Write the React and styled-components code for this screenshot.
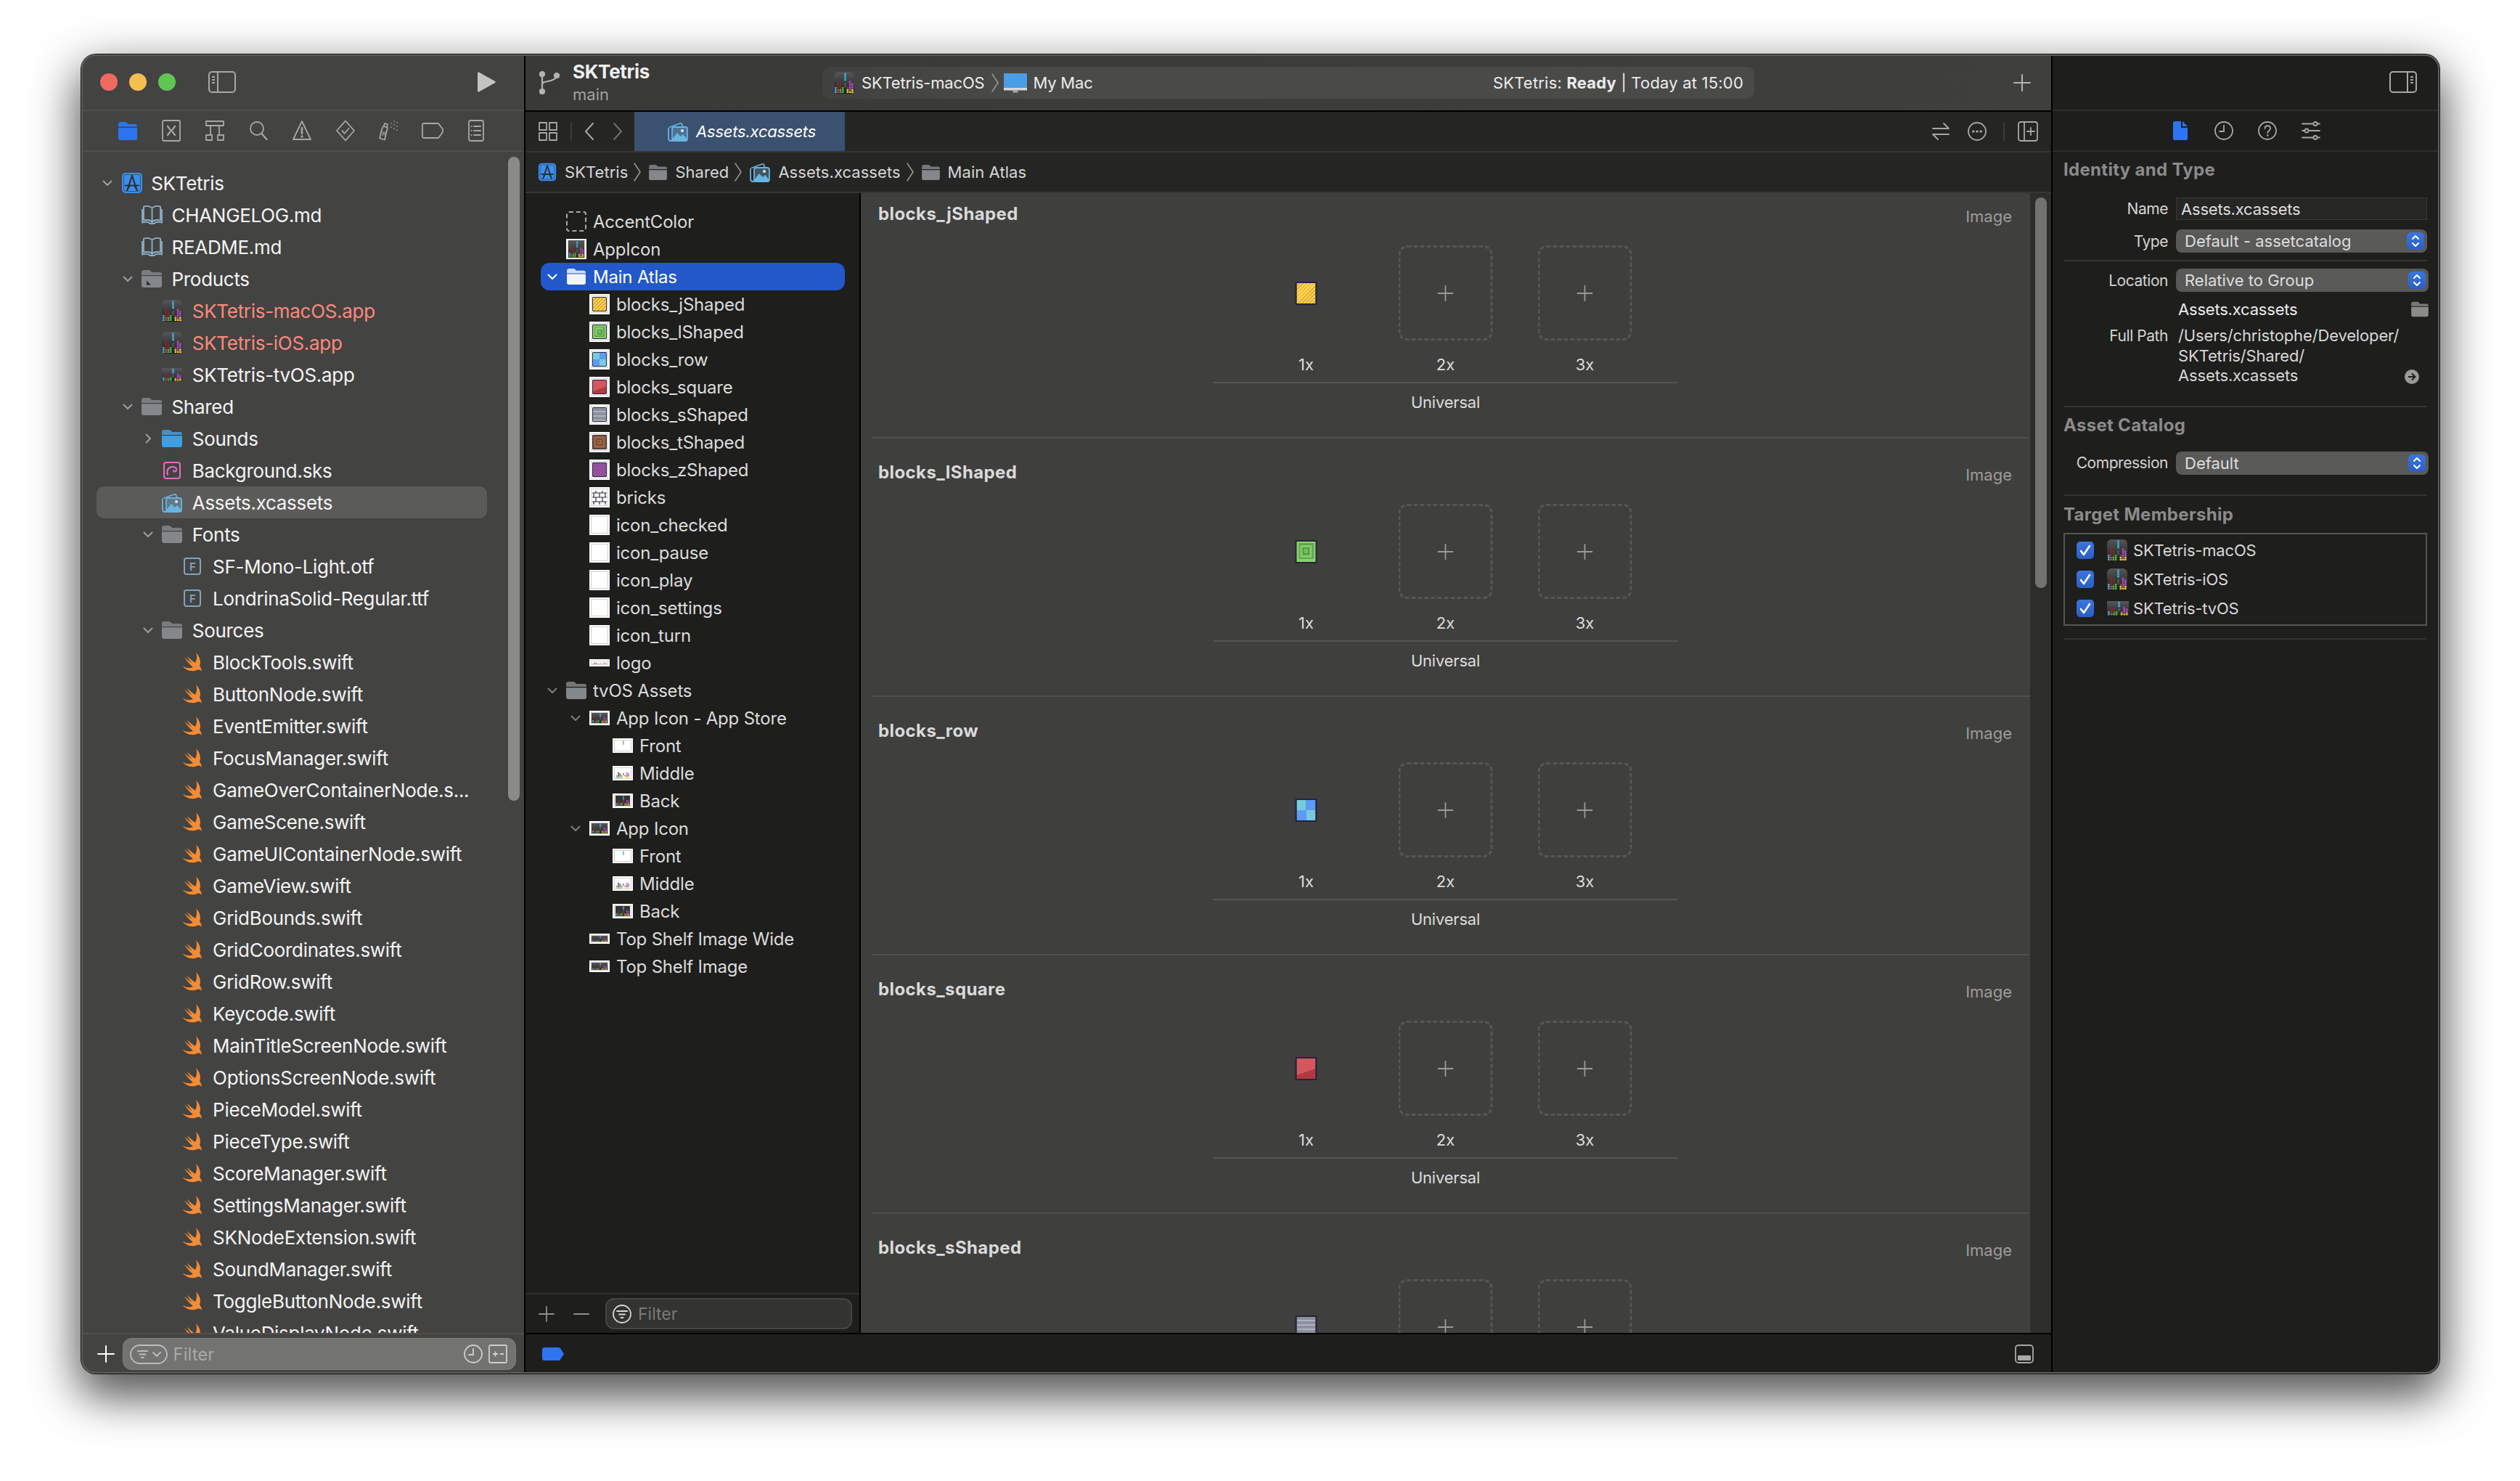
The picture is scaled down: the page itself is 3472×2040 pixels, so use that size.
import React from 'react'
import styled, { createGlobalStyle } from 'styled-components'

const GlobalStyle = createGlobalStyle`
  html, body { margin: 0; padding: 0; background: #fff; }
  body { font-family: Inter, "Noto Sans", sans-serif; width: 3472px; height: 2040px; overflow: hidden; }
  * { box-sizing: border-box; }
`

const Page = styled.div`
  width: 3472px;
  height: 2040px;
  padding: 75px 0 0 112px;
`
const Window = styled.div`
  width: 3249px;
  height: 1817px;
  display: flex;
  border-radius: 20px;
  overflow: hidden;
  position: relative;
  box-shadow: 0 0 0 1px #111, 0 30px 60px 0 rgba(0, 0, 0, 0.5), 0 20px 70px 4px rgba(0, 0, 0, 0.35);
  &::after {
    content: '';
    position: absolute;
    inset: 0;
    border-radius: 20px;
    box-shadow: inset 0 0 0 2px #5c5c5b;
    pointer-events: none;
  }
`

/* left column */
const Navigator = styled.aside`
  width: 610px;
  flex: none;
  display: flex;
  flex-direction: column;
  background: #434342;
  position: relative;
`
const NavTitle = styled.div`
  height: 78px;
  flex: none;
  display: flex;
  align-items: center;
  padding: 0 39px 0 26px;
  border-bottom: 2px solid #4f4f4e;
`
const Lights = styled.div`
  display: flex;
  gap: 16px;
  margin-right: 45px;
`
const Light = styled.span`
  width: 24px;
  height: 24px;
  border-radius: 50%;
  background: ${p => p.$color};
`
const NavTabs = styled.div`
  height: 56px;
  flex: none;
  display: flex;
  align-items: center;
  padding-left: 34px;
  border-bottom: 2px solid #4f4f4e;
`
const NavTab = styled.span`
  width: 60px;
  height: 30px;
  flex: none;
  display: flex;
  align-items: center;
  justify-content: center;
`
const Tree = styled.div`
  flex: 1;
  min-height: 0;
  overflow: hidden;
  padding: 21px 0 0 21px;
`
const TreeRow = styled.div`
  height: 44px;
  width: 538px;
  display: flex;
  align-items: center;
  padding-left: ${p => 7.5 + p.$level * 28.3}px;
  border-radius: 10px;
  background: ${p => (p.$selected ? '#5b5b5a' : 'transparent')};
`
const ChevronSlot = styled.span`
  width: 26px;
  flex: none;
  display: flex;
  align-items: center;
`
const TreeIcon = styled.span`
  width: 41.7px;
  flex: none;
  display: flex;
  align-items: center;
`
const TreeLabel = styled.span`
  font-size: 26px;
  letter-spacing: -0.3px;
  white-space: nowrap;
  color: ${p => (p.$missing ? '#fb8a7d' : '#f4f4f4')};
`
const FontBadge = styled.span`
  width: 24px;
  height: 24px;
  margin-left: 2px;
  border: 2px solid #83a4bd;
  border-radius: 4px;
  color: #83a4bd;
  font-size: 15px;
  font-weight: 600;
  display: flex;
  align-items: center;
  justify-content: center;
`
const NavScroll = styled.div`
  position: absolute;
  left: 588px;
  top: 141px;
  width: 16px;
  height: 887px;
  border-radius: 8px;
  background: #8a8a89;
`
const NavFooter = styled.div`
  height: 56px;
  flex: none;
  display: flex;
  align-items: center;
  padding: 0 11px 0 22px;
  gap: 10.6px;
  border-top: 2px solid #505050;
  background: #434342;
`
const NavFilter = styled.div`
  flex: 1;
  height: 44px;
  display: flex;
  align-items: center;
  padding: 0 11px 0 9px;
  border-radius: 12px;
  background: #737372;
  border: 1px solid #7d7d7c;
`
const NavFilterText = styled.span`
  flex: 1;
  margin-left: 8px;
  font-size: 24px;
  color: #a9a9a8;
`

/* middle column */
const Center = styled.main`
  flex: 1;
  min-width: 0;
  display: flex;
  flex-direction: column;
  border-left: 2px solid #000;
`
const Toolbar = styled.div`
  height: 79px;
  flex: none;
  display: flex;
  align-items: center;
  padding: 0 28px 0 19px;
  background: linear-gradient(90deg, #393938, #3f3f3e);
  border-bottom: 2px solid #000;
`
const BranchInfo = styled.div`
  width: 344px;
  flex: none;
  margin-left: 18px;
  display: flex;
  flex-direction: column;
  gap: 2px;
`
const ProjectName = styled.div`
  font-size: 26px;
  line-height: 30px;
  font-weight: 700;
  letter-spacing: -0.3px;
  color: #efefef;
`
const BranchName = styled.div`
  font-size: 22px;
  line-height: 28px;
  color: #a2a2a1;
`
const Activity = styled.div`
  width: 1284px;
  height: 44px;
  flex: none;
  display: flex;
  align-items: center;
  justify-content: space-between;
  padding: 0 15px 0 16px;
  border-radius: 10px;
  background: linear-gradient(90deg, #41413f, #4a4a49 22%);
  font-size: 22px;
  color: #ececec;
`
const Scheme = styled.div`
  display: flex;
  align-items: center;
  gap: 10px;
  letter-spacing: -0.2px;
`
const SchemeDevice = styled.span`
  display: flex;
  align-items: center;
  gap: 8px;
  margin-left: -3px;
`
const StatusText = styled.div`
  letter-spacing: 0.2px;
  b { font-weight: 700; }
`
const Spacer = styled.span`
  flex: 1;
`
const TabBar = styled.div`
  height: 56px;
  flex: none;
  display: flex;
  align-items: flex-start;
  padding: 0 18px 0 18px;
  background: #252524;
  border-bottom: 2px solid #363635;
`
const TabTools = styled.div`
  height: 54px;
  width: 132px;
  flex: none;
  display: flex;
  align-items: center;
`
const TabDivider = styled.span`
  width: 2px;
  height: 26px;
  background: #3a3a39;
  margin: 0 ${p => p.$space}px;
`
const EditorTab = styled.div`
  width: 290px;
  height: 54px;
  flex: none;
  display: flex;
  align-items: center;
  padding-left: 46px;
  gap: 11px;
  background: #3a5170;
  font-size: 22px;
  font-style: italic;
  letter-spacing: -0.2px;
  color: #fff;
`
const TabActions = styled.div`
  height: 54px;
  display: flex;
  align-items: center;
  gap: 18px;
`
const TabAction = styled.span`
  display: flex;
  align-items: center;
  margin-left: ${p => p.$before || 0}px;
`
const PathBar = styled.div`
  height: 56px;
  flex: none;
  display: flex;
  align-items: center;
  padding: 0 0 0 17px;
  background: #252524;
  border-bottom: 2px solid #363635;
  font-size: 22px;
  letter-spacing: 0.05px;
  color: #d6d6d6;
`
const Crumb = styled.span`
  display: flex;
  align-items: center;
  gap: 11px;
`
const CrumbSep = styled.span`
  display: flex;
  margin: 0 11px 0 8px;
`
const Editor = styled.div`
  flex: 1;
  min-height: 0;
  display: flex;
`
const AssetList = styled.div`
  width: 462px;
  flex: none;
  display: flex;
  flex-direction: column;
  background: #1e1e1d;
  border-right: 2px solid #000;
`
const AssetRows = styled.div`
  flex: 1;
  min-height: 0;
  overflow: hidden;
  padding: 20px 0 0 20.5px;
`
const AssetRow = styled.div`
  width: 419.5px;
  height: 38px;
  display: flex;
  align-items: center;
  padding-left: ${p => 9.5 + p.$level * 32}px;
  border-radius: 12px;
  background: ${p => (p.$selected ? '#2258c9' : 'transparent')};
  font-size: 24px;
  letter-spacing: -0.2px;
  color: ${p => (p.$selected ? '#fff' : '#dcdcdc')};
`
const AssetIcon = styled.span`
  width: 37px;
  flex: none;
  display: flex;
  align-items: center;
`
const Frame = styled.span`
  width: 28px;
  height: ${p => p.$h || 28}px;
  flex: none;
  display: flex;
  align-items: center;
  justify-content: center;
  background: #fff;
  box-shadow: inset 0 0 0 2px #fff, inset 0 0 0 3px #cfcfcf;
  overflow: hidden;
`
const square = (color, size) => `linear-gradient(${color}, ${color}) center / ${size}% ${size}% no-repeat`
const BLOCKS = {
  j: 'repeating-linear-gradient(135deg, #f9d84a 0 2.4px, #e79a3c 2.4px 3.6px)',
  l: `${square('#78c060', 22)}, ${square('#4f9a46', 38)}, ${square('#86cb6a', 62)}, ${square('#5da64f', 80)}, #8dd070`,
  row: 'conic-gradient(#5b9cf4 0 25%, #77cbe0 0 50%, #5b9cf4 0 75%, #77cbe0 0)',
  square: 'linear-gradient(160deg, #d4575f 0 62%, #b03a3f 62%)',
  s: 'repeating-linear-gradient(180deg, #8c909e 0 4px, #b0b3bb 4px 6px)',
  t: `${square('#85553a', 18)}, ${square('#a0694a', 34)}, ${square('#7a4e35', 58)}, ${square('#a0694a', 78)}, #82553a`,
  z: 'repeating-conic-gradient(#a65bb0 0 25%, #83468f 0 50%) 0 0 / 4px 4px',
}
const Block = styled.span`
  display: block;
  width: ${p => p.$w}px;
  height: ${p => p.$h}px;
  flex: none;
  border: ${p => p.$edge}px solid #24253a;
  border-radius: 1px;
  background: ${p => BLOCKS[p.$kind]};
`
const AssetFooter = styled.div`
  height: 55px;
  flex: none;
  display: flex;
  align-items: center;
  padding: 0 10px 0 18px;
  border-top: 2px solid #323231;
`
const ListFilter = styled.div`
  flex: 1;
  height: 43px;
  margin-left: 22px;
  display: flex;
  align-items: center;
  gap: 9px;
  padding-left: 8px;
  border: 2px solid #454544;
  border-radius: 12px;
  background: #333332;
  font-size: 23px;
  color: #7a7a79;
`
const Sets = styled.div`
  flex: 1;
  min-width: 0;
  overflow: hidden;
  background: #3f3f3e;
`
const SetStack = styled.div`
  margin-top: -18px;
`
const AssetSet = styled.section`
  height: 356px;
  flex: none;
  margin-left: 15px;
  border-bottom: 2px solid #4f4f4e;
`
const SetHead = styled.div`
  display: flex;
  justify-content: space-between;
  padding: 32px 25px 0 9px;
  height: 62px;
`
const SetTitle = styled.div`
  font-size: 24px;
  line-height: 30px;
  font-weight: 700;
  letter-spacing: 0.4px;
  color: #dadada;
`
const SetKind = styled.div`
  font-size: 22px;
  line-height: 30px;
  margin-top: 3px;
  color: #9c9c9b;
`
const Slots = styled.div`
  width: 640px;
  margin: 28px auto 0;
  transform: translateX(-7.5px);
`
const SlotGrid = styled.div`
  display: grid;
  grid-template-columns: repeat(3, 192px);
  justify-content: center;
`
const SlotBox = styled.div`
  width: 130px;
  height: 131px;
  justify-self: center;
  display: flex;
  align-items: center;
  justify-content: center;
  border-radius: 12px;
  border: ${p => (p.$empty ? '3px dashed #565655' : '3px solid transparent')};
`
const SlotLabel = styled.div`
  margin-top: 18px;
  height: 30px;
  line-height: 30px;
  text-align: center;
  font-size: 22px;
  color: #dddddd;
`
const Idiom = styled.div`
  margin-top: 9px;
  border-top: 2px solid #555554;
  padding-top: 11px;
  line-height: 30px;
  text-align: center;
  font-size: 22px;
  letter-spacing: -0.2px;
  color: #dddddd;
`
const Track = styled.div`
  width: 29px;
  flex: none;
  padding: 6px 0 0 7px;
  background: #2d2d2c;
`
const Thumb = styled.div`
  width: 16px;
  height: 538px;
  border-radius: 8px;
  background: #727271;
`
const StatusBar = styled.div`
  height: 56px;
  flex: none;
  display: flex;
  align-items: center;
  justify-content: space-between;
  padding: 0 24px 0 23px;
  border-top: 2px solid #000;
  background: #1e1e1d;
`

/* right column */
const Inspector = styled.aside`
  width: 535px;
  flex: none;
  display: flex;
  flex-direction: column;
  background: #1e1e1d;
  border-left: 2px solid #000;
`
const InspectorTop = styled.div`
  height: 78px;
  flex: none;
  display: flex;
  align-items: center;
  justify-content: flex-end;
  padding-right: 31px;
  border-bottom: 2px solid #2d2d2c;
`
const InspectorTabs = styled.div`
  height: 56px;
  flex: none;
  display: flex;
  align-items: center;
  justify-content: center;
  padding-right: 2px;
  border-bottom: 2px solid #2d2d2c;
`
const InspectorTab = styled.span`
  width: 60px;
  display: flex;
  justify-content: center;
`
const Pane = styled.div`
  padding: 0 15px 0 15px;
`
const Heading = styled.div`
  height: ${p => p.$h}px;
  display: flex;
  align-items: center;
  font-size: 24px;
  font-weight: 700;
  letter-spacing: 0.3px;
  color: #8b8b8a;
`
const Field = styled.div`
  display: grid;
  grid-template-columns: 144px 346px;
  column-gap: 11px;
  align-items: ${p => p.$align || 'center'};
  margin-top: ${p => p.$top || 0}px;
`
const FieldLabel = styled.div`
  text-align: right;
  font-size: 21px;
  line-height: ${p => p.$line || 'normal'};
  letter-spacing: -0.45px;
  color: #d4d4d4;
`
const TextInput = styled.div`
  height: 31px;
  padding-left: 6px;
  display: flex;
  align-items: center;
  font-size: 22px;
  letter-spacing: -0.2px;
  color: #dedede;
  background: #262625;
  border: 1px solid #3a3a39;
`
const Popup = styled.div`
  height: 32px;
  display: flex;
  align-items: center;
  justify-content: space-between;
  padding: 0 4px 0 12px;
  width: ${p => (p.$wide ? 348 : 346)}px;
  border-radius: 8px;
  background: #595958;
  font-size: 22px;
  color: #dedede;
`
const Stepper = styled.span`
  width: 24px;
  height: 24px;
  border-radius: 6px;
  background: linear-gradient(#3b76de, #2a5fc4);
  display: flex;
  align-items: center;
  justify-content: center;
`
const Rule = styled.div`
  height: 2px;
  margin: ${p => p.$top}px 0 0;
  width: 501px;
  background: #333332;
`
const PathRow = styled.div`
  display: flex;
  align-items: center;
  justify-content: space-between;
  font-size: 22px;
  letter-spacing: -0.2px;
  color: #ececec;
  height: 32px;
  padding-left: 3px;
  width: 348px;
`
const FullPath = styled.div`
  font-size: 22px;
  line-height: 27.6px;
  letter-spacing: -0.15px;
  color: #d8d8d8;
  padding-left: 3px;
  position: relative;
`
const PathArrow = styled.span`
  position: absolute;
  right: 11px;
  bottom: 3px;
  display: flex;
`
const MemberBox = styled.div`
  width: 501px;
  height: 128px;
  padding: 2px 0 0 16px;
  border: 2px solid #555554;
`
const Member = styled.div`
  height: 40px;
  display: flex;
  align-items: center;
  font-size: 22px;
  letter-spacing: -0.2px;
  color: #d8d8d8;
`
const Check = styled.span`
  width: 24px;
  height: 24px;
  margin-right: 18px;
  border-radius: 5px;
  background: linear-gradient(#3b76de, #2a5fc4);
  display: flex;
  align-items: center;
  justify-content: center;
`
const MemberIcon = styled.span`
  width: 36px;
  flex: none;
  display: flex;
`

/* drawings */
const Svg = styled.svg`
  display: block;
  flex: none;
`
const GREY = '#a8a8a7'

const Chevron = ({ dir = 'down', color = '#a0a09f' }) => (
  <Svg width="14" height="14" viewBox="0 0 14 14" fill="none" stroke={color} strokeWidth="2" strokeLinecap="round" strokeLinejoin="round">
    {dir === 'down' ? <path d="M1.5 4.5 7 10l5.5-5.5" /> : <path d="M4.5 1.5 10 7l-5.5 5.5" />}
  </Svg>
)
const Folder = ({ color = '#84878b', w = 28, h = 26, badge }) => (
  <Svg width={w} height={h} viewBox="0 0 28 26">
    <path d="M0 4.5C0 2 1 1 3.5 1h6c1.500 0 2.300.6 3.200 1.600L14 4h11c2 0 3 1 3 3v1H0z" fill={color} opacity="0.85" />
    <path d="M0 9.200h28V22c0 2-1 3-3 3H3c-2 0-3-1-3-3z" fill={color} />
    {badge && <path d="M7 15.500v6h6z" fill="#2c2c2c" />}
  </Svg>
)
const Book = () => (
  <Svg width="29" height="28" viewBox="0 0 29 28" fill="none" stroke="#8eb1ca" strokeWidth="1.800" strokeLinejoin="round">
    <path d="M14.500 5C12 1.500 7 1.500 3 2.500v19c4-.8 9-.8 11.500 2.500 2.500-3.300 7.500-3.300 11.500-2.500v-19C22 1.500 17 1.500 14.500 5zM14.500 5v19" />
    <path d="M1 6v18.500c4-.8 9-.5 11 1.500h5c2-2 7-2.300 11-1.500V6" />
  </Svg>
)
const Swift = () => (
  <Svg width="28" height="27" viewBox="0 0 28 27">
    <path fill="#f58c35" d="M19 0c5 5 7.500 12 5 18 2 3 3 6 3 8-2-2.500-4.500-3-6.500-2-5.500 2.500-13.500 2-20.500-5.500 5.500 3 11 3.500 15 1.500C10.500 16.500 6.500 12 3 6.500c4 3.500 8 7 11 8.500-3-3-5.500-6.500-7.500-10.500 4 4 8 7.500 11.500 9.500 2-4 3-9 1-14z" />
  </Svg>
)
const ProjectIcon = ({ size = 30 }) => (
  <Svg width={size} height={size} viewBox="0 0 30 30">
    <rect x="1" y="1" width="28" height="28" rx="5" fill="#3b8fee" />
    <rect x="3.500" y="3.500" width="23" height="23" rx="3" fill="none" stroke="#2a2a2a" strokeWidth="1" opacity="0.6" />
    <path d="M15 5 9 23M15 5l6 18M6 18.500h18M8 25l3-5M22 25l-3-5" stroke="#2f2f35" strokeWidth="2.200" fill="none" strokeLinecap="round" />
  </Svg>
)
const CELLS = [
  '....b...',
  '....b...',
  '....b...',
  '....b...',
  '.r....p.',
  '.rr.d.pp',
  '.rr.d.pp',
  'brrg.dpp',
  'bRgg.ypy',
  'bRgg.yyy',
]
const CELL_COLORS = { b: '#39b3e6', r: '#7b2f27', R: '#e23b46', g: '#46c24d', p: '#b14dbd', y: '#f2d22e', d: '#5a5a5a' }
const Cells = ({ only }) =>
  CELLS.map((row, y) =>
    row.split('').map((c, x) => {
      if (c === '.') return null
      if (only === 'front' && c !== 'b') return null
      if (only === 'front' && x !== 4) return null
      if (only === 'middle' && c === 'b' && x === 4) return null
      return <rect key={`${x}-${y}`} x={1 + x * 3.3} y={1.5 + y * 2.8} width="2.6" height="2.3" fill={CELL_COLORS[c]} />
    })
  )
const GameIcon = ({ w = 28, h = 30 }) => (
  <Svg width={w} height={h} viewBox="0 0 28 30">
    <defs>
      <linearGradient id="gameBg" x1="0" y1="0" x2="0" y2="1">
        <stop offset="0" stopColor="#565657" />
        <stop offset="1" stopColor="#1d1d1e" />
      </linearGradient>
    </defs>
    <rect width="28" height="30" rx="6" fill="url(#gameBg)" />
    <Cells />
  </Svg>
)
const TvGame = ({ w = 28, h = 16, bg = 'url(#tvBg)', only }) => (
  <Svg width={w} height={h} viewBox="0 0 28 30" preserveAspectRatio="none">
    <defs>
      <linearGradient id="tvBg" x1="0" y1="0" x2="0" y2="1">
        <stop offset="0" stopColor="#58585a" />
        <stop offset="1" stopColor="#222223" />
      </linearGradient>
    </defs>
    <rect width="28" height="30" fill={bg} />
    <Cells only={only} />
  </Svg>
)
const AssetsIcon = () => (
  <Svg width="28" height="28" viewBox="0 0 28 28" fill="none">
    <path d="M2 8.500 17 3c1.300-.4 2.200 0 2.600 1.200L21 8" stroke="#6ab4e0" strokeWidth="1.800" />
    <path d="M7 27H4c-1.500 0-2.500-.8-2.800-2.200L1 9" stroke="#6ab4e0" strokeWidth="1.800" />
    <rect x="6" y="8" width="21" height="19" rx="3" fill="#6ab4e0" fillOpacity="0.35" stroke="#6ab4e0" strokeWidth="1.800" />
    <path d="M6.500 24 13 16l5 5 3-3 5.500 6v1c0 1-1 1.500-2 1.500H8.500c-1 0-2-.5-2-2z" fill="#6ab4e0" />
    <circle cx="20" cy="13" r="2" fill="#dfeefa" />
  </Svg>
)
const SksIcon = () => (
  <Svg width="28" height="28" viewBox="0 0 28 28" fill="none" stroke="#e86ac8" strokeWidth="2">
    <path d="M6 3h16c2 0 3 1 3 3v16c0 2-1 3-3 3H6c-2 0-3-1-3-3V6c0-2 1-3 3-3z" />
    <path d="M8 20c-2-5 0-10 6-11 4-.5 7 2 6 5-1 2.500-4 2-4 0" strokeLinecap="round" />
  </Svg>
)
const Plus = ({ size = 24, color = '#fff', weight = 2 }) => (
  <Svg width={size} height={size} viewBox="0 0 24 24" stroke={color} strokeWidth={weight} strokeLinecap="round">
    <path d="M12 1v22M1 12h22" />
  </Svg>
)
const SidebarLeft = () => (
  <Svg width="38" height="30" viewBox="0 0 38 30" fill="none" stroke={GREY} strokeWidth="2">
    <rect x="1" y="1" width="36" height="28" rx="4" />
    <path d="M13 1v28M5 8h4M5 12h4M5 16h4" />
  </Svg>
)
const SidebarRight = () => (
  <Svg width="38" height="30" viewBox="0 0 38 30" fill="none" stroke={GREY} strokeWidth="2">
    <rect x="1" y="1" width="36" height="28" rx="4" />
    <path d="M25 1v28M29 8h4M29 12h4M29 16h4" />
  </Svg>
)
const Play = () => (
  <Svg width="26" height="28" viewBox="0 0 26 28">
    <path d="M1 2c0-1.500 1-2 2.300-1.300l21.500 12c1.200.7 1.200 1.900 0 2.600l-21.500 12C2 28 1 27.500 1 26z" fill="#c4c4c3" />
  </Svg>
)
const TabIcon = ({ children, w = 28, h = 30, vb = '0 0 28 30' }) => (
  <Svg width={w} height={h} viewBox={vb} fill="none" stroke={GREY} strokeWidth="1.800" strokeLinecap="round" strokeLinejoin="round">
    {children}
  </Svg>
)
const NAV_TABS = [
  <Svg key="f" width="26" height="26" viewBox="0 0 26 26"><path d="M0 4c0-2 1-3 3-3h6c1.500 0 2.300.6 3.200 1.600L13.500 4H23c2 0 3 1 3 3v.5H0z" fill="#2d75f0" /><path d="M0 9h26v14c0 2-1 3-3 3H3c-2 0-3-1-3-3z" fill="#2d75f0" /></Svg>,
  <TabIcon key="b" w="26" vb="0 0 26 30"><rect x="1" y="1" width="24" height="28" rx="2" /><path d="M8 9l3 4M18 9l-3 4M8 21l3-4M18 21l-3-4" strokeWidth="2.200" /><circle cx="13" cy="15" r="1" /></TabIcon>,
  <TabIcon key="h" w="26" vb="0 0 26 30"><rect x="1" y="2" width="24" height="6" /><path d="M7 8v13M19 8v13" /><rect x="1" y="21" width="8" height="7" /><rect x="17" y="21" width="8" height="7" /></TabIcon>,
  <TabIcon key="s" w="26" vb="0 0 26 30"><circle cx="11" cy="12" r="9" /><path d="m17.500 19 7 8" strokeWidth="2.200" /></TabIcon>,
  <TabIcon key="w" w="26" vb="0 0 26 30"><path d="M13 2 25 27H1z" /><path d="M13 11v8" strokeWidth="2.600" /><circle cx="13" cy="23" r=".8" /></TabIcon>,
  <TabIcon key="t" w="26" vb="0 0 26 30"><path d="M13 1.500 25 15 13 28.500 1 15z" /><path d="m8.500 15 3 4 6-7" /></TabIcon>,
  <TabIcon key="d" w="30" vb="0 0 30 30"><path d="M7 9l6 1.500-4 17-7-2 3-12zM8 9l1-4 4 1-1 4" /><path d="m6 17 4 4M10 17l-4 4" strokeWidth="1.500" /><path d="M18 5h.1M22 2h.1M22 7h.1M26 4h.1M18 10h.1M22 12h.1M26 9h.1M26 14h.1" strokeWidth="1.700" /></TabIcon>,
  <TabIcon key="g" w="30" h="22" vb="0 0 30 22"><path d="M3 1h20l6 8v4l-6 8H3c-1.200 0-2-.8-2-2V3c0-1.200.8-2 2-2z" /></TabIcon>,
  <TabIcon key="r" w="22" vb="0 0 22 30"><rect x="1" y="1" width="20" height="28" rx="2.500" /><path d="M8 9h9M8 15h9M8 21h9M4.500 9h.2M4.500 15h.2M4.500 21h.2" /></TabIcon>,
]

const FILE_TREE = [
  { label: 'SKTetris', level: 0, open: 'down', icon: <ProjectIcon /> },
  { label: 'CHANGELOG.md', level: 1, icon: <Book /> },
  { label: 'README.md', level: 1, icon: <Book /> },
  { label: 'Products', level: 1, open: 'down', icon: <Folder badge /> },
  { label: 'SKTetris-macOS.app', level: 2, missing: true, icon: <GameIcon /> },
  { label: 'SKTetris-iOS.app', level: 2, missing: true, icon: <GameIcon /> },
  { label: 'SKTetris-tvOS.app', level: 2, icon: <TvGame h={18} /> },
  { label: 'Shared', level: 1, open: 'down', icon: <Folder /> },
  { label: 'Sounds', level: 2, open: 'right', icon: <Folder color="#3e9fe6" /> },
  { label: 'Background.sks', level: 2, icon: <SksIcon /> },
  { label: 'Assets.xcassets', level: 2, selected: true, icon: <AssetsIcon /> },
  { label: 'Fonts', level: 2, open: 'down', icon: <Folder /> },
  { label: 'SF-Mono-Light.otf', level: 3, icon: <FontBadge>F</FontBadge> },
  { label: 'LondrinaSolid-Regular.ttf', level: 3, icon: <FontBadge>F</FontBadge> },
  { label: 'Sources', level: 2, open: 'down', icon: <Folder /> },
  ...[
    'BlockTools.swift', 'ButtonNode.swift', 'EventEmitter.swift', 'FocusManager.swift', 'GameOverContainerNode.s...',
    'GameScene.swift', 'GameUIContainerNode.swift', 'GameView.swift', 'GridBounds.swift', 'GridCoordinates.swift',
    'GridRow.swift', 'Keycode.swift', 'MainTitleScreenNode.swift', 'OptionsScreenNode.swift', 'PieceModel.swift',
    'PieceType.swift', 'ScoreManager.swift', 'SettingsManager.swift', 'SKNodeExtension.swift', 'SoundManager.swift',
    'ToggleButtonNode.swift', 'ValueDisplayNode.swift',
  ].map(label => ({ label, level: 3, icon: <Swift /> })),
]

const blockThumb = kind => <Frame><Block $kind={kind} $w={20} $h={20} $edge={1} /></Frame>
const plainThumb = <Frame />
const wideThumb = (only, bg) => <Frame $h={20}><TvGame w={20} h={14} only={only} bg={bg} /></Frame>

const Dashed = styled.span`
  width: 28px;
  height: 28px;
  border: 2px dashed #a8a8a8;
  border-radius: 4px;
`
const Bricks = () => (
  <Svg width="20" height="20" viewBox="0 0 20 20" stroke="#2a2a3c" strokeWidth="1.200" fill="none">
    <path d="M0 4h20M0 10h20M0 16h20M5 1v3M14 1v3M2 4v6M10 4v6M18 4v6M5 10v6M14 10v6M2 16v4M10 16v4M18 16v4" />
  </Svg>
)

const ASSETS = [
  { label: 'AccentColor', level: 0, icon: <Dashed /> },
  { label: 'AppIcon', level: 0, icon: <Frame><TvGame w={22} h={24} /></Frame> },
  { label: 'Main Atlas', level: 0, open: 'down', selected: true, icon: <Folder color="#f2f4f8" h={24} /> },
  { label: 'blocks_jShaped', level: 1, icon: blockThumb('j') },
  { label: 'blocks_lShaped', level: 1, icon: blockThumb('l') },
  { label: 'blocks_row', level: 1, icon: blockThumb('row') },
  { label: 'blocks_square', level: 1, icon: blockThumb('square') },
  { label: 'blocks_sShaped', level: 1, icon: blockThumb('s') },
  { label: 'blocks_tShaped', level: 1, icon: blockThumb('t') },
  { label: 'blocks_zShaped', level: 1, icon: blockThumb('z') },
  { label: 'bricks', level: 1, icon: <Frame><Bricks /></Frame> },
  { label: 'icon_checked', level: 1, icon: plainThumb },
  { label: 'icon_pause', level: 1, icon: plainThumb },
  { label: 'icon_play', level: 1, icon: plainThumb },
  { label: 'icon_settings', level: 1, icon: plainThumb },
  { label: 'icon_turn', level: 1, icon: plainThumb },
  { label: 'logo', level: 1, icon: <Frame $h={10}><TvGame w={22} h={4} only="middle" bg="#fff" /></Frame> },
  { label: 'tvOS Assets', level: 0, open: 'down', icon: <Folder /> },
  { label: 'App Icon - App Store', level: 1, open: 'down', icon: <Frame $h={20}><TvGame w={22} h={14} /></Frame> },
  { label: 'Front', level: 2, icon: wideThumb('front', '#fff') },
  { label: 'Middle', level: 2, icon: wideThumb('middle', '#fff') },
  { label: 'Back', level: 2, icon: wideThumb('none', '#333') },
  { label: 'App Icon', level: 1, open: 'down', icon: <Frame $h={20}><TvGame w={22} h={14} /></Frame> },
  { label: 'Front', level: 2, icon: wideThumb('front', '#fff') },
  { label: 'Middle', level: 2, icon: wideThumb('middle', '#fff') },
  { label: 'Back', level: 2, icon: wideThumb('none', '#333') },
  { label: 'Top Shelf Image Wide', level: 1, icon: <Frame $h={14}><TvGame w={22} h={8} /></Frame> },
  { label: 'Top Shelf Image', level: 1, icon: <Frame $h={16}><TvGame w={22} h={10} /></Frame> },
]

const SETS = [
  { name: 'blocks_jShaped', kind: 'j' },
  { name: 'blocks_lShaped', kind: 'l' },
  { name: 'blocks_row', kind: 'row' },
  { name: 'blocks_square', kind: 'square' },
  { name: 'blocks_sShaped', kind: 's' },
]

const SelectArrows = () => (
  <Svg width="12" height="18" viewBox="0 0 12 18" fill="none" stroke="#fff" strokeWidth="2" strokeLinecap="round" strokeLinejoin="round">
    <path d="m2 6 4-4 4 4M2 12l4 4 4-4" />
  </Svg>
)
const PathChevron = () => (
  <Svg width="10" height="26" viewBox="0 0 10 26" fill="none" stroke="#9a9a99" strokeWidth="1.500" strokeLinecap="round" strokeLinejoin="round">
    <path d="m1 1 8 12-8 12" />
  </Svg>
)
const MacIcon = () => (
  <Svg width="32" height="30" viewBox="0 0 32 30">
    <rect x="0" y="2" width="32" height="20" fill="#4a9de6" />
    <rect x="0" y="22" width="32" height="3.500" fill="#d8d8d8" />
    <path d="M13 25.500h6l1 3h-8z" fill="#a8a8a8" />
  </Svg>
)
const CheckMark = () => (
  <Svg width="18" height="18" viewBox="0 0 18 18" fill="none" stroke="#fff" strokeWidth="2.600" strokeLinecap="round" strokeLinejoin="round">
    <path d="M3 10l4 5 8-12" />
  </Svg>
)

export default function App() {
  return (
    <Page>
      <GlobalStyle />
      <Window>
        <Navigator>
          <NavTitle>
            <Lights>
              <Light $color="#ee6a5f" />
              <Light $color="#f5bf4f" />
              <Light $color="#61c554" />
            </Lights>
            <SidebarLeft />
            <Spacer />
            <Play />
          </NavTitle>
          <NavTabs>
            {NAV_TABS.map((icon, i) => <NavTab key={i}>{icon}</NavTab>)}
          </NavTabs>
          <Tree>
            {FILE_TREE.map(row => (
              <TreeRow key={row.label} $level={row.level} $selected={row.selected}>
                <ChevronSlot>{row.open && <Chevron dir={row.open} />}</ChevronSlot>
                <TreeIcon>{row.icon}</TreeIcon>
                <TreeLabel $missing={row.missing}>{row.label}</TreeLabel>
              </TreeRow>
            ))}
          </Tree>
          <NavFooter>
            <Plus />
            <NavFilter>
              <Svg width="52" height="27" viewBox="0 0 52 27" fill="none" stroke="#bdbdbc" strokeWidth="1.800" strokeLinecap="round" strokeLinejoin="round">
                <rect x="1" y="1" width="50" height="25" rx="12.500" />
                <path d="M11 9h13M13.500 13.500h8M16 18h3M32 11l5 5 5-5" />
              </Svg>
              <NavFilterText>Filter</NavFilterText>
              <Svg width="26" height="26" viewBox="0 0 26 26" fill="none" stroke="#cfcfce" strokeWidth="1.800" strokeLinecap="round">
                <circle cx="13" cy="13" r="12" />
                <path d="M13 6v8H7" />
              </Svg>
              <TabAction $before={8}>
                <Svg width="26" height="26" viewBox="0 0 26 26" fill="none" stroke="#cfcfce" strokeWidth="1.800">
                  <rect x="1" y="1" width="24" height="24" rx="2" />
                  <path d="M6 13h7M9.500 9.500v7M16 13h5" />
                </Svg>
              </TabAction>
            </NavFilter>
          </NavFooter>
          <NavScroll />
        </Navigator>

        <Center>
          <Toolbar>
            <Svg width="28" height="32" viewBox="0 0 28 32" fill="none" stroke="#b4b4b3" strokeWidth="2.200">
              <circle cx="4" cy="4" r="3" fill="#b4b4b3" />
              <circle cx="4" cy="28" r="3" fill="#b4b4b3" />
              <circle cx="24" cy="6" r="3" fill="#b4b4b3" />
              <path d="M4 4v24M4 19c0-5 6-4 12-6 5-1.500 8-3 8-7" />
            </Svg>
            <BranchInfo>
              <ProjectName>SKTetris</ProjectName>
              <BranchName>main</BranchName>
            </BranchInfo>
            <Activity>
              <Scheme>
                <GameIcon />
                <span>SKTetris-macOS</span>
                <PathChevron />
                <SchemeDevice>
                  <MacIcon />
                  <span>My Mac</span>
                </SchemeDevice>
              </Scheme>
              <StatusText>SKTetris: <b>Ready</b> | Today at 15:00</StatusText>
            </Activity>
            <Spacer />
            <Plus color="#b4b4b3" />
          </Toolbar>

          <TabBar>
            <TabTools>
              <TabIcon w="26" h="26" vb="0 0 26 26">
                <rect x="1" y="1" width="10" height="10" />
                <rect x="15" y="1" width="10" height="10" />
                <rect x="1" y="15" width="10" height="10" />
                <rect x="15" y="15" width="10" height="10" />
              </TabIcon>
              <TabDivider $space={18} />
              <Svg width="12" height="24" viewBox="0 0 12 24" fill="none" stroke="#a8a8a7" strokeWidth="2" strokeLinecap="round" strokeLinejoin="round">
                <path d="M11 1 1 12l10 11" />
              </Svg>
              <TabAction $before={27}>
                <Svg width="12" height="24" viewBox="0 0 12 24" fill="none" stroke="#6f6f6e" strokeWidth="2" strokeLinecap="round" strokeLinejoin="round">
                  <path d="m1 1 10 11L1 23" />
                </Svg>
              </TabAction>
            </TabTools>
            <EditorTab>
              <AssetsIcon />
              <span>Assets.xcassets</span>
            </EditorTab>
            <Spacer />
            <TabActions>
              <TabIcon w="26" h="28" vb="0 0 26 28">
                <path d="M2 10h22M17 3l7 7M2 18h22M9 25l-7-7" />
              </TabIcon>
              <TabAction $before={6}>
                <Svg width="26" height="28" viewBox="0 0 26 28" fill="none" stroke={GREY} strokeWidth="1.800" strokeLinecap="round">
                  <circle cx="13" cy="14" r="12" />
                  <path d="M7.500 14h.6M12.700 14h.6M17.900 14h.6" strokeWidth="3" />
                </Svg>
              </TabAction>
              <TabAction $before={5}><TabDivider $space={0} /></TabAction>
              <TabIcon w="28" h="28" vb="0 0 28 28">
                <rect x="1" y="1" width="26" height="26" rx="3" />
                <path d="M9 1v26M18 9v10M13 14h10" />
              </TabIcon>
            </TabActions>
          </TabBar>

          <PathBar>
            <Crumb><ProjectIcon size={26} />SKTetris</Crumb>
            <CrumbSep><PathChevron /></CrumbSep>
            <Crumb><Folder w={25} h={23} />Shared</Crumb>
            <CrumbSep><PathChevron /></CrumbSep>
            <Crumb><AssetsIcon />Assets.xcassets</Crumb>
            <CrumbSep><PathChevron /></CrumbSep>
            <Crumb><Folder w={25} h={23} />Main Atlas</Crumb>
          </PathBar>

          <Editor>
            <AssetList>
              <AssetRows>
                {ASSETS.map((row, i) => (
                  <AssetRow key={i} $level={row.level} $selected={row.selected}>
                    <ChevronSlot>{row.open && <Chevron dir={row.open} color={row.selected ? '#fff' : '#7e7e7d'} />}</ChevronSlot>
                    <AssetIcon>{row.icon}</AssetIcon>
                    <span>{row.label}</span>
                  </AssetRow>
                ))}
              </AssetRows>
              <AssetFooter>
                <Plus color="#8e8e8d" size={22} />
                <TabAction $before={26}>
                  <Svg width="22" height="22" viewBox="0 0 22 22" stroke="#8e8e8d" strokeWidth="2" strokeLinecap="round">
                    <path d="M1 11h20" />
                  </Svg>
                </TabAction>
                <ListFilter>
                  <Svg width="26" height="26" viewBox="0 0 26 26" fill="none" stroke="#d8d8d8" strokeWidth="1.800" strokeLinecap="round">
                    <circle cx="13" cy="13" r="12" />
                    <path d="M6 9h14M9 13.500h8M11.500 18h3" />
                  </Svg>
                  Filter
                </ListFilter>
              </AssetFooter>
            </AssetList>

            <Sets>
              <SetStack>
                {SETS.map(set => (
                  <AssetSet key={set.name}>
                    <SetHead>
                      <SetTitle>{set.name}</SetTitle>
                      <SetKind>Image</SetKind>
                    </SetHead>
                    <Slots>
                      <SlotGrid>
                        <SlotBox><Block $kind={set.kind} $w={30} $h={32} $edge={2} /></SlotBox>
                        <SlotBox $empty><Plus size={22} color="#9a9a99" /></SlotBox>
                        <SlotBox $empty><Plus size={22} color="#9a9a99" /></SlotBox>
                        <SlotLabel>1x</SlotLabel>
                        <SlotLabel>2x</SlotLabel>
                        <SlotLabel>3x</SlotLabel>
                      </SlotGrid>
                      <Idiom>Universal</Idiom>
                    </Slots>
                  </AssetSet>
                ))}
              </SetStack>
            </Sets>
            <Track><Thumb /></Track>
          </Editor>

          <StatusBar>
            <Svg width="30" height="18" viewBox="0 0 30 18">
              <path d="M3 0h19c1.500 0 2.400.5 3.200 1.500L30 9l-4.800 7.500c-.8 1-1.700 1.500-3.200 1.500H3c-2 0-3-1-3-3V3c0-2 1-3 3-3z" fill="#2d75f0" />
            </Svg>
            <Svg width="26" height="26" viewBox="0 0 26 26" fill="none" stroke={GREY} strokeWidth="1.800">
              <rect x="1" y="1" width="24" height="24" rx="4" />
              <rect x="4" y="15" width="18" height="7" rx="1" fill={GREY} stroke="none" />
            </Svg>
          </StatusBar>
        </Center>

        <Inspector>
          <InspectorTop><SidebarRight /></InspectorTop>
          <InspectorTabs>
            <InspectorTab>
              <Svg width="20" height="26" viewBox="0 0 20 26">
                <path d="M0 2c0-1 1-2 2-2h9v9h9v15c0 1-1 2-2 2H2c-1 0-2-1-2-2z" fill="#2d75f0" />
                <path d="M13 0l7 7h-7z" fill="#2d75f0" />
              </Svg>
            </InspectorTab>
            <InspectorTab>
              <Svg width="26" height="26" viewBox="0 0 26 26" fill="none" stroke={GREY} strokeWidth="1.800" strokeLinecap="round">
                <circle cx="13" cy="13" r="12" />
                <path d="M13 6v8H7" />
              </Svg>
            </InspectorTab>
            <InspectorTab>
              <Svg width="26" height="26" viewBox="0 0 26 26" fill="none" stroke={GREY} strokeWidth="1.800" strokeLinecap="round">
                <circle cx="13" cy="13" r="12" />
                <path d="M9.500 10c0-5 7.500-5 7.500 0 0 3-3.500 3-3.700 6" />
                <path d="M13.300 19.500h.1" strokeWidth="2.400" />
              </Svg>
            </InspectorTab>
            <InspectorTab>
              <Svg width="26" height="26" viewBox="0 0 26 26" fill="none" stroke={GREY} strokeWidth="1.800" strokeLinecap="round">
                <path d="M1 3.500h15M22 3.500h3M1 13h3M10 13h15M1 22.500h15M22 22.500h3" />
                <circle cx="19" cy="3.500" r="2.500" />
                <circle cx="7" cy="13" r="2.500" />
                <circle cx="19" cy="22.500" r="2.500" />
              </Svg>
            </InspectorTab>
          </InspectorTabs>
          <Pane>
            <Heading $h={48}>Identity and Type</Heading>
            <Field $top={15}>
              <FieldLabel>Name</FieldLabel>
              <TextInput>Assets.xcassets</TextInput>
            </Field>
            <Field $top={13}>
              <FieldLabel>Type</FieldLabel>
              <Popup>Default - assetcatalog<Stepper><SelectArrows /></Stepper></Popup>
            </Field>
            <Rule $top={10} />
            <Field $top={10}>
              <FieldLabel>Location</FieldLabel>
              <Popup $wide>Relative to Group<Stepper><SelectArrows /></Stepper></Popup>
            </Field>
            <Field $top={8}>
              <span />
              <PathRow>Assets.xcassets<Folder w={24} h={22} color="#8b8b8a" /></PathRow>
            </Field>
            <Field $top={7} $align="start">
              <FieldLabel $line="27.6px">Full Path</FieldLabel>
              <FullPath>
                /Users/christophe/Developer/<br />SKTetris/Shared/<br />Assets.xcassets
                <PathArrow>
                  <Svg width="20" height="20" viewBox="0 0 20 20">
                    <circle cx="10" cy="10" r="10" fill="#9a9a99" />
                    <path d="M5 10h9M10 5.500 14.500 10 10 14.500" fill="none" stroke="#1e1e1d" strokeWidth="2" />
                  </Svg>
                </PathArrow>
              </FullPath>
            </Field>
            <Rule $top={27} />
            <Heading $h={49}>Asset Catalog</Heading>
            <Field $top={12}>
              <FieldLabel>Compression</FieldLabel>
              <Popup $wide>Default<Stepper><SelectArrows /></Stepper></Popup>
            </Field>
            <Rule $top={27} />
            <Heading $h={51}>Target Membership</Heading>
            <MemberBox>
              <Member><Check><CheckMark /></Check><MemberIcon><GameIcon /></MemberIcon>SKTetris-macOS</Member>
              <Member><Check><CheckMark /></Check><MemberIcon><GameIcon /></MemberIcon>SKTetris-iOS</Member>
              <Member><Check><CheckMark /></Check><MemberIcon><TvGame h={20} w={30} /></MemberIcon>SKTetris-tvOS</Member>
            </MemberBox>
            <Rule $top={17} />
          </Pane>
        </Inspector>
      </Window>
    </Page>
  )
}
